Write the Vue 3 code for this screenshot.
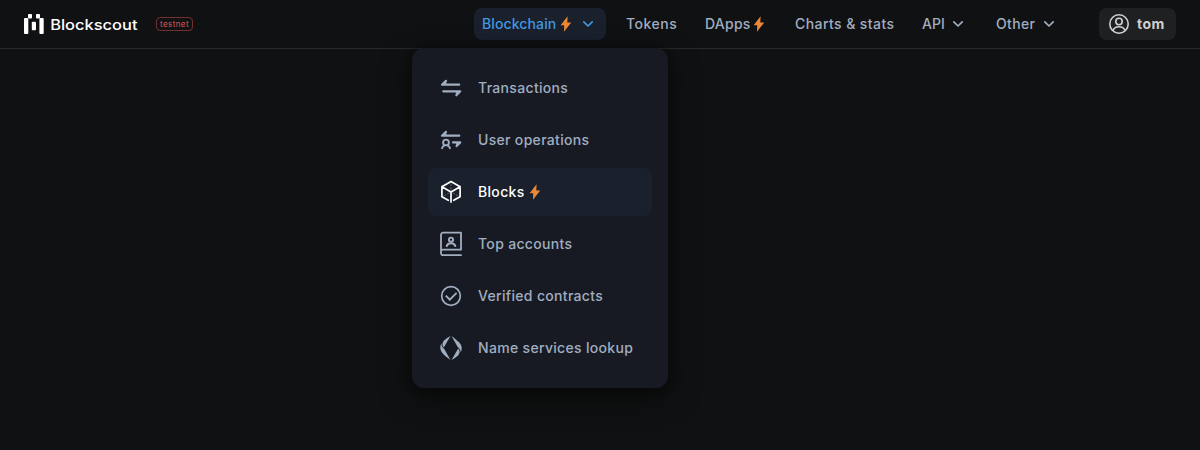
<script setup>
const nav = [
  { label: 'Blockchain', width: 74, spacing: 0.12, bolt: true, arrow: true, active: true },
  { label: 'Tokens', width: 51, spacing: 0.5 },
  { label: 'DApps', width: 44, spacing: 0.25, bolt: true },
  { label: 'Charts & stats', width: 99, spacing: 0.42 },
  { label: 'API', width: 22, spacing: 0, arrow: true },
  { label: 'Other', width: 39, spacing: 0.35, arrow: true },
]
const menu = [
  { label: 'Transactions', icon: 'transactions' },
  { label: 'User operations', icon: 'operations' },
  { label: 'Blocks', icon: 'block', bolt: true, active: true },
  { label: 'Top accounts', icon: 'accounts' },
  { label: 'Verified contracts', icon: 'verified' },
  { label: 'Name services lookup', icon: 'names' },
]
</script>

<template>
  <div class="page">
    <header class="bar">
      <div class="brand">
        <svg class="logo" width="114" height="22" viewBox="0 0 114 22">
          <g fill="#fff">
            <rect x="4" y="1" width="4" height="4.4" rx=".9" />
            <rect x="12" y="1" width="4" height="4.4" rx=".9" />
            <rect x="0" y="5" width="4.3" height="16" rx=".9" />
            <rect x="15.4" y="5" width="4.3" height="16" rx=".9" />
            <rect x="7.8" y="8.7" width="4.2" height="8.5" rx=".9" />
            <text class="word" x="26.2" y="16.6" textLength="87.3" lengthAdjust="spacingAndGlyphs">Blockscout</text>
          </g>
        </svg>
        <span class="badge">testnet</span>
      </div>
      <nav class="nav">
        <a v-for="item in nav" :key="item.label" class="link" :class="{ on: item.active }">
          <span :style="{ width: item.width + 'px', letterSpacing: item.spacing + 'px' }">{{ item.label }}</span>
          <svg v-if="item.bolt" class="bolt" width="12" height="16" viewBox="0 0 12 16"><path d="M7.6.2.6 9.2h3.6L4 15.8l7.2-9.2H7.3z" /></svg>
          <svg v-if="item.arrow" class="arrow" width="12" height="8" viewBox="0 0 12 8"><path d="M1.8 1.8 6 6l4.2-4.2" /></svg>
        </a>
      </nav>
      <button class="user">
        <svg width="20" height="20" viewBox="0 0 20 20" fill="none" stroke="currentColor" stroke-width="1.6">
          <circle cx="10" cy="10" r="9.2" />
          <circle cx="10" cy="7.5" r="3.2" />
          <path d="M3.8 16.6C5 14 7.2 12.8 10 12.8s5 1.2 6.2 3.8" />
        </svg>
        <span>tom</span>
      </button>
    </header>
    <div class="menu">
      <a v-for="item in menu" :key="item.label" class="row" :class="{ on: item.active }">
        <svg class="icon" width="30" height="30" viewBox="0 0 30 30" fill="none" stroke="currentColor" stroke-width="2" stroke-linecap="round" stroke-linejoin="round">
          <template v-if="item.icon === 'transactions'">
            <path d="M23.2 11.7H6L10 7.8M7.3 18.3H24.2L20.4 22.3" stroke-width="2.2" />
            <path d="M10 7.8v3.6H6zM20.3 22.2v-3.6h3.7z" fill="currentColor" stroke-width=".8" />
          </template>
          <template v-else-if="item.icon === 'operations'">
            <path d="M23.2 10.7H6L10 6.8M17 17.4H24.2L20.6 21.1" stroke-width="2.2" />
            <path d="M10 6.8v3.6H6zM20.5 21v-3.4h3.6z" fill="currentColor" stroke-width=".8" />
            <circle cx="10" cy="17.5" r="2.9" stroke-width="1.9" />
            <path d="M6 23.2c.4-1.6 1.4-2.5 2.7-2.9M14 23.2c-.4-1.6-1.4-2.5-2.7-2.9" stroke-width="1.9" />
          </template>
          <template v-else-if="item.icon === 'block'">
            <path d="M12.3 23.3 5.9 19.7V9.7L15 4.6 24.1 9.7V19.7L17.7 23.3M5.9 9.7 15 14.9 24.1 9.7M15 14.9V25" stroke-width="1.7" />
            <path d="M15 6.5V13M8 18.8l5-2.8M22 18.8l-5-2.8" stroke-width=".8" stroke-dasharray="2 2" opacity=".35" />
          </template>
          <template v-else-if="item.icon === 'accounts'">
            <path d="M25 26.2H7a2 2 0 0 1-2-2V5.7a2 2 0 0 1 2-2h18v17H7a2 2 0 0 0-2 2" stroke-width="1.8" />
            <circle cx="15" cy="10.7" r="2.1" stroke-width="1.9" />
            <path d="M10.7 17c.8-1.9 2.3-2.7 4.3-2.7s3.5.8 4.3 2.7" stroke-width="2" />
          </template>
          <template v-else-if="item.icon === 'verified'">
            <circle cx="15" cy="15" r="9.3" stroke-width="1.7" />
            <path d="m9.800 14.600 4 4 6.800-6.700" stroke-width="1.900" stroke-linecap="butt" stroke-linejoin="miter" />
          </template>
          <g v-else fill="currentColor" stroke="none">
            <path d="M14.500 3 7.800 14.500C6 12.500 5.900 9.800 8 7.400 10 5.600 12.200 4.200 14.500 3z" />
            <path d="M5.300 10.300c-1.800 3.600-1.300 7.300 1.400 10.100 2.200 2.200 5.300 4.800 7.800 6.600L8.300 16C6.300 14.600 5.300 12.500 5.300 10.300z" />
            <path d="M15.500 27l6.700-11.500c1.800 2 1.900 4.700-.2 7.100-2 1.800-4.200 3.200-6.500 4.400z" />
            <path d="M24.700 19.700c1.800-3.600 1.300-7.300-1.400-10.100-2.200-2.200-5.300-4.800-7.800-6.600L21.700 14c2 1.400 3 3.500 3 5.700z" />
          </g>
        </svg>
        <span>{{ item.label }}</span>
        <svg v-if="item.bolt" class="bolt" width="12" height="16" viewBox="0 0 12 16"><path d="M7.6.2.6 9.2h3.6L4 15.8l7.2-9.2H7.3z" /></svg>
      </a>
    </div>
  </div>
</template>

<style>
body { background: #101112; }
</style>

<style scoped>
.page {
  position: relative;
  height: 450px;
  overflow: hidden;
  background: #101112;
  color: #a0aec0;
  font: 450 14px/20px Inter, sans-serif;
  letter-spacing: .32px;
}
.bar {
  box-sizing: border-box;
  height: 49px;
  padding: 8px 24px;
  display: flex;
  align-items: flex-start;
  border-bottom: 1px solid #28292a;
}
.brand { display: flex; align-items: center; height: 32px; flex: 1; }
.logo { display: block; }
.word { font: 500 14.5px Inter, sans-serif; letter-spacing: 0; }
.badge {
  box-sizing: border-box;
  width: 37px;
  height: 14px;
  margin-left: 18px;
  border: 1px solid #742f31;
  border-radius: 4px;
  color: #d85a5a;
  font: 400 8px/12px Inter, sans-serif;
  letter-spacing: .4px;
  text-align: center;
}
.nav { display: flex; gap: 12px; margin-right: 32px; }
.link { display: flex; align-items: center; height: 32px; padding: 0 8px; border-radius: 8px; white-space: nowrap; }
.link.on { background: #1a202c; color: #4299e1; }
.bolt { margin: 0 2px 0 4px; fill: #ed8936; flex: none; }
.arrow { margin: 0 4px 0 8px; fill: none; stroke: currentColor; stroke-width: 1.7; stroke-linecap: round; stroke-linejoin: round; }
.user {
  display: flex;
  align-items: center;
  gap: 8px;
  width: 77px;
  height: 32px;
  padding: 0 0 0 10px;
  border: 0;
  border-radius: 8px;
  background: #1f2021;
  color: #d0d0d0;
  font: 700 14px/20px Inter, sans-serif;
  letter-spacing: .45px;
}
.menu {
  position: absolute;
  left: 412px;
  top: 48px;
  box-sizing: border-box;
  width: 256px;
  height: 340px;
  padding: 16px;
  display: flex;
  flex-direction: column;
  gap: 4px;
  border-radius: 12px;
  background: #181a23;
  box-shadow: 0 10px 30px rgba(0, 0, 0, .55), 0 0 8px rgba(0, 0, 0, .3);
}
.row { display: flex; align-items: center; height: 48px; padding-left: 8px; border-radius: 8px; }
.row.on { background: #1a202c; color: #fff; }
.icon { margin-right: 12px; }
</style>
